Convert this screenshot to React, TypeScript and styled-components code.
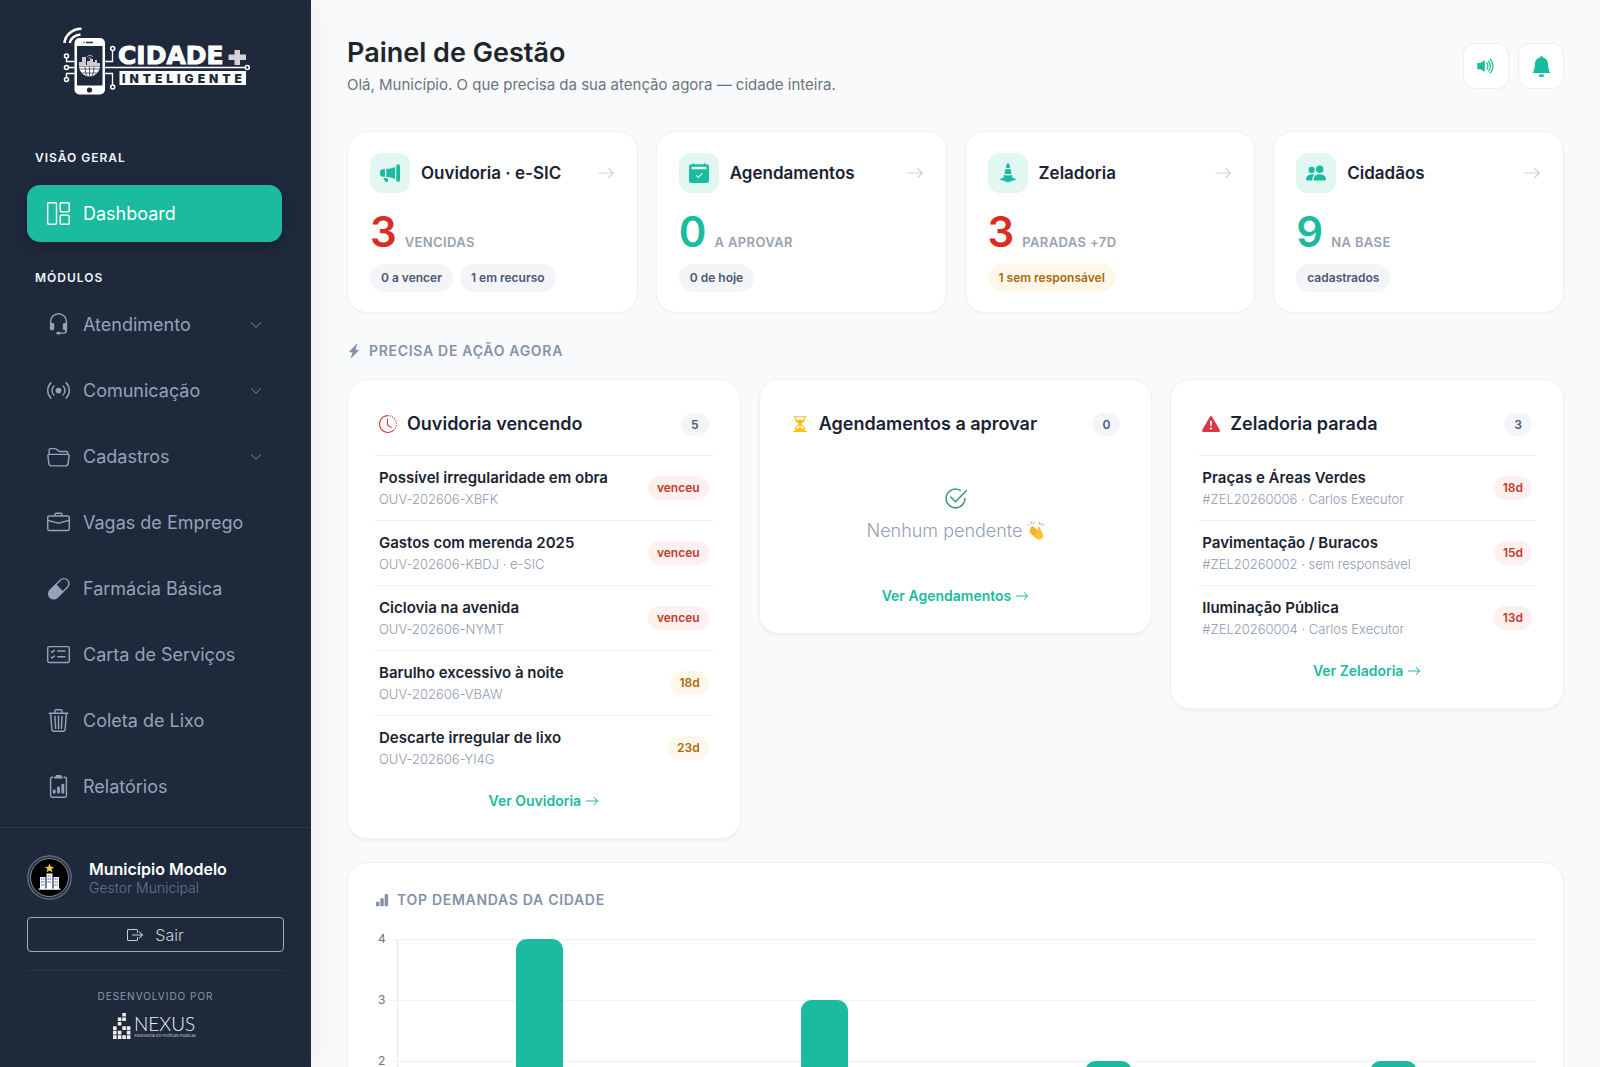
import React from "react";
import styled, { createGlobalStyle } from "styled-components";
import {
    BsArrowRight,
    BsBarChartFill,
    BsBellFill,
    BsBoxArrowRight,
    BsBriefcase,
    BsBroadcast,
    BsCalendar2CheckFill,
    BsCapsule,
    BsCardChecklist,
    BsCheck2Circle,
    BsChevronDown,
    BsClipboard2Data,
    BsClockHistory,
    BsConeStriped,
    BsExclamationTriangleFill,
    BsFolder2Open,
    BsHeadset,
    BsHourglassSplit,
    BsLightningChargeFill,
    BsMegaphoneFill,
    BsPeopleFill,
    BsTrash3,
    BsVolumeUpFill,
} from "react-icons/bs";

type Tone = "red" | "green" | "amber" | "gray";

const GlobalStyle = createGlobalStyle`
    * {
        box-sizing: border-box;
    }

    body {
        margin: 0;
        background: #f8fafc;
        color: #1a2333;
        font-family: "Inter", "Open Sans", sans-serif;
        font-size: 16px;
    }

    a {
        color: inherit;
        text-decoration: none;
    }

    h1, h2, p, ul {
        margin: 0;
        padding: 0;
    }

    ul {
        list-style: none;
    }

    button {
        font-family: inherit;
        cursor: pointer;
    }
`;

const Layout = styled.div`
    display: flex;
    height: 100vh;
`;

/* ---------- sidebar ---------- */

const Sidebar = styled.aside`
    display: flex;
    flex-direction: column;
    flex: 0 0 311px;
    background: #1e293b;
    box-shadow: 4px 0 24px rgba(30, 41, 59, 0.05);
    z-index: 1;
`;

const Brand = styled.a`
    display: flex;
    justify-content: center;
    padding: 24px 0 44px;
`;

const Nav = styled.nav`
    flex: 1;
    min-height: 0;
    overflow: hidden;
    padding: 0 29px 0 27px;
`;

const NavTitle = styled.h2`
    padding: 0 8px;
    font-size: 12px;
    line-height: 20px;
    font-weight: 600;
    letter-spacing: 1px;
    text-transform: uppercase;
    color: #f1f5f9;
`;

const NavList = styled.ul`
    display: flex;
    flex-direction: column;
    gap: 9px;
    padding: 17px 0 26px;

    & + ${NavTitle} + & {
        padding-top: 8px;
    }
`;

const NavLink = styled.a<{ $active?: boolean }>`
    display: flex;
    align-items: center;
    gap: 13px;
    height: 57px;
    padding: 0 20px;
    border-radius: 13px;
    font-size: 18px;
    color: ${({ $active }) => ($active ? "#ffffff" : "#94a3b8")};
    background: ${({ $active }) => ($active ? "#1abb9f" : "transparent")};
    box-shadow: ${({ $active }) => ($active ? "0 4px 12px rgba(0, 0, 0, 0.25)" : "none")};

    svg {
        flex: none;
        width: 23px;
        height: 23px;
    }

    svg:nth-of-type(2) {
        width: 12px;
        height: 12px;
        margin-left: auto;
        opacity: 0.8;
    }
`;

const SidebarFooter = styled.div`
    padding: 27px 27px 26px;
    border-top: 1px solid #2c384a;
`;

const User = styled.div`
    display: flex;
    align-items: center;
    gap: 17px;
`;

const UserName = styled.p`
    font-size: 16px;
    line-height: 19px;
    font-weight: 600;
    color: #ffffff;
`;

const UserRole = styled.p`
    font-size: 14px;
    line-height: 17px;
    font-weight: 300;
    color: #64748b;
`;

const Logout = styled.button`
    display: flex;
    align-items: center;
    justify-content: center;
    gap: 12px;
    width: 100%;
    height: 35px;
    margin-top: 17px;
    border: 1px solid #a5abb5;
    border-radius: 4px;
    background: transparent;
    font-size: 16px;
    font-weight: 300;
    color: #cbd0d8;
`;

const Developer = styled.div`
    display: flex;
    flex-direction: column;
    align-items: center;
    gap: 9px;
    margin-top: 18px;
    padding-top: 18px;
    border-top: 1px solid #2c384a;
    font-size: 10px;
    line-height: 15px;
    letter-spacing: 1px;
    text-transform: uppercase;
    color: #8f97a4;

    svg {
        overflow: visible;
        letter-spacing: normal;
        text-transform: none;
    }
`;

/* ---------- content ---------- */

const Main = styled.main`
    flex: 1;
    min-width: 0;
    overflow-y: auto;
    scrollbar-width: none;
    padding: 36px;
`;

const Header = styled.header`
    display: flex;
    align-items: center;
    justify-content: space-between;
    margin-bottom: 35px;
`;

const PageTitle = styled.h1`
    font-size: 27px;
    line-height: 34px;
    font-weight: 600;
    color: #212529;
`;

const Lead = styled.p`
    margin-top: 4px;
    font-size: 15px;
    line-height: 22px;
    color: #6c757d;
`;

const Actions = styled.div`
    display: flex;
    gap: 9px;
`;

const IconButton = styled.button`
    display: flex;
    align-items: center;
    justify-content: center;
    width: 46px;
    height: 46px;
    padding: 0;
    border: 1px solid #eaeef4;
    border-radius: 12px;
    background: #ffffff;
    color: #1abb9f;
`;

const StatGrid = styled.section`
    display: grid;
    grid-template-columns: repeat(4, 1fr);
    gap: 18px;
`;

const StatCard = styled.a`
    display: block;
    padding: 21px 22px 20px;
    border: 1px solid #eef1f6;
    border-radius: 20px;
    background: #ffffff;
    box-shadow: 0 1px 2px rgba(30, 41, 59, 0.03);
`;

const StatHead = styled.div`
    display: flex;
    align-items: center;
    gap: 11px;
    font-size: 17px;
    font-weight: 600;

    & > svg {
        margin-left: auto;
        color: #cbd3df;
    }
`;

const StatIcon = styled.span`
    display: flex;
    align-items: center;
    justify-content: center;
    width: 40px;
    height: 40px;
    border-radius: 12px;
    background: #e2f7f2;
    color: #1abb9f;
`;

const StatValue = styled.div<{ $tone: Tone }>`
    display: flex;
    align-items: baseline;
    gap: 8px;
    margin: 17px 0 11px;
    font-size: 42px;
    line-height: 43px;
    font-weight: 600;
    color: ${({ $tone }) => ($tone === "red" ? "#d92d20" : "#1abb9f")};

    small {
        font-size: 13px;
        line-height: 16px;
        letter-spacing: 0.03em;
        text-transform: uppercase;
        color: #98a2b3;
    }
`;

const Chips = styled.div`
    display: flex;
    gap: 7px;
`;

const chipColors: Record<Tone, string> = {
    red: "background: #fef0ef; color: #c0392b;",
    green: "background: #e2f7f2; color: #1abb9f;",
    amber: "background: #fff8ea; color: #a86b0c;",
    gray: "background: #f3f5f9; color: #4a5873;",
};

const Chip = styled.span<{ $tone: Tone }>`
    padding: 0 11px;
    border-radius: 14px;
    font-size: 12px;
    line-height: 28px;
    font-weight: 600;
    ${({ $tone }) => chipColors[$tone]}
`;

const SectionTitle = styled.h2`
    display: flex;
    align-items: center;
    gap: 8px;
    font-size: 14px;
    line-height: 22px;
    font-weight: 600;
    letter-spacing: 0.05em;
    text-transform: uppercase;
    color: #8592a8;

    svg {
        width: 14px;
        height: 14px;
    }
`;

const SectionHead = styled.div`
    padding: 27px 0 17px;
`;

const PanelGrid = styled.section`
    display: grid;
    grid-template-columns: repeat(3, 1fr);
    align-items: start;
    gap: 18px;
`;

const Panel = styled.article`
    padding: 27px;
    border: 1px solid #eef1f6;
    border-radius: 20px;
    background: #ffffff;
    box-shadow: 0 2px 3px rgba(30, 41, 59, 0.05);
`;

const PanelHead = styled.header<{ $color: string }>`
    display: flex;
    align-items: center;
    gap: 10px;
    height: 34px;
    margin-bottom: 14px;
    padding: 0 4px;

    svg {
        flex: none;
        color: ${({ $color }) => $color};
    }
`;

const PanelTitle = styled.h2`
    font-size: 18px;
    line-height: 24px;
    font-weight: 600;
`;

const Counter = styled.span`
    margin-left: auto;
    padding: 0 10px;
    border-radius: 12px;
    font-size: 12px;
    line-height: 23px;
    font-weight: 600;
    ${chipColors.gray}
`;

const Row = styled.a`
    display: flex;
    align-items: center;
    justify-content: space-between;
    height: 65px;
    padding: 0 4px;
    border-top: 1px solid #eff2f5;
`;

const RowTitle = styled.p`
    font-size: 15px;
    line-height: 22px;
    font-weight: 600;
`;

const RowMeta = styled.p`
    font-size: 13px;
    line-height: 20px;
    font-weight: 300;
    color: #8f9bb0;
`;

const RowBadge = styled.span<{ $tone: Tone }>`
    padding: 0 9px;
    border-radius: 12px;
    font-size: 12px;
    line-height: 24px;
    font-weight: 600;
    ${({ $tone }) => chipColors[$tone]}
`;

const PanelLink = styled.a`
    display: flex;
    align-items: center;
    justify-content: center;
    gap: 4px;
    padding-top: 10px;
    font-size: 14px;
    line-height: 21px;
    font-weight: 600;
    color: #1abb9f;
`;

const Empty = styled.div`
    display: flex;
    flex-direction: column;
    align-items: center;
    gap: 6px;
    padding: 31px 0;
    font-size: 18px;
    line-height: 27px;
    font-weight: 300;
    color: #94a0b3;

    & > svg {
        color: #3f9d71;
    }

    p {
        display: flex;
        align-items: center;
        gap: 4px;
    }
`;

const ChartPanel = styled(Panel)`
    margin-top: 23px;
    padding-top: 26px;
`;

const Chart = styled.div`
    display: grid;
    grid-template-columns: 14px 1fr;
    padding: 28px 0 30px;
`;

const Scale = styled.div`
    display: flex;
    flex-direction: column;
    gap: 45px;
    margin-top: -8px;
    padding-left: 3px;
    font-size: 12px;
    line-height: 16px;
    color: #6b7280;
`;

const Plot = styled.div`
    display: grid;
    grid-template-columns: repeat(4, 1fr);
    align-items: end;
    justify-items: center;
    height: 244px;
    padding-left: 8px;
    background:
        linear-gradient(#e6e8eb, #e6e8eb) 8px 0 / 1px 100% no-repeat,
        repeating-linear-gradient(#f1f3f5 0 1px, transparent 1px 61px);
`;

const Bar = styled.div`
    width: 47px;
    border-radius: 11px 11px 0 0;
    background: #1abb9f;
`;

const DashboardIcon = () => (
    <svg viewBox="0 0 23 23" fill="none" stroke="currentColor" strokeWidth="1.4">
        <rect x="0.7" y="0.7" width="8.8" height="21.6" rx="1" />
        <rect x="13.2" y="0.7" width="9" height="9" rx="1" />
        <rect x="13.2" y="13.3" width="9" height="9" rx="1" />
    </svg>
);

const CidadeLogo = () => (
    <svg width="190" height="80" viewBox="0 0 190 80" role="img" aria-label="Cidade+ Inteligente">
        <path
            d="M3.500 19A17 15 0 0 1 20.500 4.800M8.800 19A12 9.500 0 0 1 19.500 10.500"
            fill="none"
            stroke="#ffffff"
            strokeWidth="2.600"
        />
        <g transform="translate(0 6)">
            <g fill="none" stroke="#ffffff">
                <path
                    d="M13.500 37.500H8M13.500 31.500H5.500V28M13.500 43.500H5.500V47M44 31.500H51.500V21M44 43.500H51.500V55M44 37.500H184"
                    strokeWidth="1.3"
                />
                <g strokeWidth="1.6">
                    <circle cx="5.500" cy="26" r="2" />
                    <circle cx="5.500" cy="37.500" r="2" />
                    <circle cx="5.500" cy="49.500" r="2" />
                    <circle cx="51.700" cy="18.500" r="2" />
                    <circle cx="51.700" cy="57" r="2" />
                    <circle cx="186.300" cy="37.500" r="2" />
                </g>
            </g>
            <rect x="13.500" y="8" width="30.500" height="56.500" rx="5" fill="#ffffff" />
            <rect x="16" y="16" width="25.500" height="39.500" fill="#1e293b" />
            <path d="M22.500 12.500h1M25 12.500h7" stroke="#1e293b" strokeWidth="1.500" />
            <circle cx="28.500" cy="60" r="2.600" fill="#1e293b" />
            <path d="M18 36V32h3v-5h4v8h1v-4h3v-2h3v3h2v-2h2v3h3v3z" fill="#c9ccd1" />
            <path d="M26 26.500a4.500 4.500 0 0 1 6 0M27.500 28.500a2 2 0 0 1 3 0" fill="none" stroke="#a9aeb6" />
            <path d="M18 36.500h21a10.500 10 0 0 1-21 0z" fill="#ffffff" />
            <path d="M18 39h21M28.500 37v9.500M24 37q0 6 2 9M33 37q0 6-2 9M20 43h17" fill="none" stroke="#1e293b" strokeWidth="0.700" />
            <text x="57" y="34" fontFamily="DejaVu Sans" fontWeight="700" fontSize="25" fill="#ffffff" stroke="#ffffff" strokeWidth="1">
                CIDADE
            </text>
            <path d="M173.500 20h5.500v4.500h6v5.500h-6v5h-5.500v-5h-6v-5.500h6z" fill="#d3d3d6" />
            <rect x="58.500" y="41" width="126.500" height="14" fill="#ffffff" />
            <text x="61" y="52.500" fontFamily="Inter" fontWeight="900" fontSize="12" letterSpacing="4" fill="#1e293b">
                INTELIGENTE
            </text>
        </g>
    </svg>
);

const CityAvatar = () => (
    <svg width="45" height="45" viewBox="0 0 45 45" aria-hidden="true">
        <circle cx="22.500" cy="22.500" r="21.700" fill="#243043" stroke="#64748b" strokeWidth="1.200" />
        <circle cx="22.500" cy="22.500" r="19" fill="#000000" stroke="#8d8d8d" />
        <path d="M11.500 33.500h22v1.300h-22zM13 22h5.500v11.500H13zM19.500 18.500h6v15h-6zM26.500 22H32v11.500h-5.500z" fill="#ffffff" />
        <path d="M14 24h3.500M14 27h3.500M14 30h3.500M20.500 21h4M20.500 24h4M20.500 27h4M27.500 24h3.500M27.500 27h3.500M27.500 30h3.500" stroke="#3b62b5" strokeDasharray="1.500 0.500" />
        <path d="m22.500 8.500 1.300 3.200 3.500.2-2.700 2.200.9 3.400-3-1.900-3 1.900.9-3.400-2.700-2.200 3.500-.2z" fill="#f5c842" />
    </svg>
);

const NexusLogo = () => (
    <svg width="86" height="28" viewBox="0 0 86 28" role="img" aria-label="Nexus">
        <path
            d="M9.300 0h3.600v3.600H9.300zM4.800 4.400h3.600V8H4.800zM9.300 4.400h3.600V8H9.300zM4.800 8.900h3.600v3.600H4.800zM0 13.300h3.600v3.600H0zM9.300 13.300h3.600v3.600H9.300zM13.800 13.300h3.600v3.600h-3.600zM0 17.800h3.600v3.600H0zM4.800 17.800h3.600v3.600H4.800zM13.800 17.800h3.600v3.600h-3.600zM0 22.300h3.600v3.600H0zM4.800 22.300h3.600v3.600H4.800zM9.300 22.300h3.600v3.600H9.300zM13.800 22.300h3.600v3.600h-3.600z"
            fill="#f1ece9"
        />
        <text x="21" y="18" fontFamily="Lato" fontWeight="300" fontSize="19" fill="#f3f4f6">NEXUS</text>
        <text x="21" y="24" fontFamily="Inter" fontSize="4" fill="#c4c8cf">Assessoria em Políticas Públicas</text>
    </svg>
);

const ClapIcon = () => (
    <svg width="18" height="19" viewBox="0 0 18 19" role="img" aria-label="👏">
        <path d="M1 3.500 2.200 4M4 .8l.4 1.500M7 1.500l-.8 1.400M12 1.500l.5 1.500M14.500 2.500l-.4 1.300M17 3.500l-1.200.9" stroke="#9aa1ab" strokeLinecap="round" />
        <path d="M4.500 5.500c.8-.8 1.500-.3 2 .2l5 4.300-.8-3c-.2-1.300 1.500-1.800 2.100-.6l3 6.600c1 2.400-.2 5-2.600 5.500-2 .5-3.700-.5-5-1.700L2.800 12c-.9-.9 0-2 .9-1.600C2 9 2.600 8 3.500 8c-.4-1 .3-2.100 1-2.500z" fill="#fbc236" />
        <path d="m3.700 10.400 4.400 3.800M3.700 8l5.300 4.500M5 6l5.500 4.700" fill="none" stroke="#e08f1c" strokeWidth="0.800" />
    </svg>
);

const modules = [
    { label: "Atendimento", icon: BsHeadset, nested: true },
    { label: "Comunicação", icon: BsBroadcast, nested: true },
    { label: "Cadastros", icon: BsFolder2Open, nested: true },
    { label: "Vagas de Emprego", icon: BsBriefcase },
    { label: "Farmácia Básica", icon: BsCapsule },
    { label: "Carta de Serviços", icon: BsCardChecklist },
    { label: "Coleta de Lixo", icon: BsTrash3 },
    { label: "Relatórios", icon: BsClipboard2Data },
];

const stats: { title: string; icon: React.ElementType; value: number; unit: string; tone: Tone; chips: string[]; chipTone: Tone }[] = [
    { title: "Ouvidoria · e-SIC", icon: BsMegaphoneFill, value: 3, unit: "Vencidas", tone: "red", chips: ["0 a vencer", "1 em recurso"], chipTone: "gray" },
    { title: "Agendamentos", icon: BsCalendar2CheckFill, value: 0, unit: "A aprovar", tone: "green", chips: ["0 de hoje"], chipTone: "gray" },
    { title: "Zeladoria", icon: BsConeStriped, value: 3, unit: "Paradas +7d", tone: "red", chips: ["1 sem responsável"], chipTone: "amber" },
    { title: "Cidadãos", icon: BsPeopleFill, value: 9, unit: "Na base", tone: "green", chips: ["cadastrados"], chipTone: "gray" },
];

const panels: {
    title: string;
    icon: React.ElementType;
    color: string;
    link: string;
    rows: { title: string; meta: string; badge: string; tone: Tone }[];
}[] = [
    {
        title: "Ouvidoria vencendo",
        icon: BsClockHistory,
        color: "#dc3545",
        link: "Ver Ouvidoria",
        rows: [
            { title: "Possível irregularidade em obra", meta: "OUV-202606-XBFK", badge: "venceu", tone: "red" },
            { title: "Gastos com merenda 2025", meta: "OUV-202606-KBDJ · e-SIC", badge: "venceu", tone: "red" },
            { title: "Ciclovia na avenida", meta: "OUV-202606-NYMT", badge: "venceu", tone: "red" },
            { title: "Barulho excessivo à noite", meta: "OUV-202606-VBAW", badge: "18d", tone: "amber" },
            { title: "Descarte irregular de lixo", meta: "OUV-202606-YI4G", badge: "23d", tone: "amber" },
        ],
    },
    { title: "Agendamentos a aprovar", icon: BsHourglassSplit, color: "#ffc107", link: "Ver Agendamentos", rows: [] },
    {
        title: "Zeladoria parada",
        icon: BsExclamationTriangleFill,
        color: "#dc3545",
        link: "Ver Zeladoria",
        rows: [
            { title: "Praças e Áreas Verdes", meta: "#ZEL20260006 · Carlos Executor", badge: "18d", tone: "red" },
            { title: "Pavimentação / Buracos", meta: "#ZEL20260002 · sem responsável", badge: "15d", tone: "red" },
            { title: "Iluminação Pública", meta: "#ZEL20260004 · Carlos Executor", badge: "13d", tone: "red" },
        ],
    },
];

const demands = [4, 3, 2, 2];
const scaleMax = 4;

const App = () => {
    return (
        <>
            <GlobalStyle />
            <Layout>
                <Sidebar>
                    <Brand href="#">
                        <CidadeLogo />
                    </Brand>
                    <Nav>
                        <NavTitle>Visão geral</NavTitle>
                        <NavList>
                            <li>
                                <NavLink href="#" $active>
                                    <DashboardIcon />
                                    Dashboard
                                </NavLink>
                            </li>
                        </NavList>
                        <NavTitle>Módulos</NavTitle>
                        <NavList>
                            {modules.map(({ label, icon: Icon, nested }) => (
                                <li key={label}>
                                    <NavLink href="#">
                                        <Icon />
                                        {label}
                                        {nested && <BsChevronDown />}
                                    </NavLink>
                                </li>
                            ))}
                        </NavList>
                    </Nav>
                    <SidebarFooter>
                        <User>
                            <CityAvatar />
                            <div>
                                <UserName>Município Modelo</UserName>
                                <UserRole>Gestor Municipal</UserRole>
                            </div>
                        </User>
                        <Logout type="button">
                            <BsBoxArrowRight />
                            Sair
                        </Logout>
                        <Developer>
                            Desenvolvido por
                            <NexusLogo />
                        </Developer>
                    </SidebarFooter>
                </Sidebar>

                <Main>
                    <Header>
                        <div>
                            <PageTitle>Painel de Gestão</PageTitle>
                            <Lead>Olá, Município. O que precisa da sua atenção agora — cidade inteira.</Lead>
                        </div>
                        <Actions>
                            <IconButton type="button" aria-label="Som">
                                <BsVolumeUpFill size={20} />
                            </IconButton>
                            <IconButton type="button" aria-label="Notificações">
                                <BsBellFill size={21} />
                            </IconButton>
                        </Actions>
                    </Header>

                    <StatGrid>
                        {stats.map(({ title, icon: Icon, value, unit, tone, chips, chipTone }) => (
                            <StatCard href="#" key={title}>
                                <StatHead>
                                    <StatIcon>
                                        <Icon size={20} />
                                    </StatIcon>
                                    {title}
                                    <BsArrowRight size={18} />
                                </StatHead>
                                <StatValue $tone={tone}>
                                    {value}
                                    <small>{unit}</small>
                                </StatValue>
                                <Chips>
                                    {chips.map((chip) => (
                                        <Chip $tone={chipTone} key={chip}>{chip}</Chip>
                                    ))}
                                </Chips>
                            </StatCard>
                        ))}
                    </StatGrid>

                    <SectionHead>
                        <SectionTitle>
                            <BsLightningChargeFill />
                            Precisa de ação agora
                        </SectionTitle>
                    </SectionHead>

                    <PanelGrid>
                        {panels.map(({ title, icon: Icon, color, link, rows }) => (
                            <Panel key={title}>
                                <PanelHead $color={color}>
                                    <Icon size={18} />
                                    <PanelTitle>{title}</PanelTitle>
                                    <Counter>{rows.length}</Counter>
                                </PanelHead>
                                {rows.map((row) => (
                                    <Row href="#" key={row.meta}>
                                        <div>
                                            <RowTitle>{row.title}</RowTitle>
                                            <RowMeta>{row.meta}</RowMeta>
                                        </div>
                                        <RowBadge $tone={row.tone}>{row.badge}</RowBadge>
                                    </Row>
                                ))}
                                {rows.length === 0 && (
                                    <Empty>
                                        <BsCheck2Circle size={25} />
                                        <p>Nenhum pendente <ClapIcon /></p>
                                    </Empty>
                                )}
                                <PanelLink href="#">
                                    {link}
                                    <BsArrowRight />
                                </PanelLink>
                            </Panel>
                        ))}
                    </PanelGrid>

                    <ChartPanel>
                        <SectionTitle>
                            <BsBarChartFill />
                            Top demandas da cidade
                        </SectionTitle>
                        <Chart>
                            <Scale>
                                {[4, 3, 2, 1].map((tick) => (
                                    <span key={tick}>{tick}</span>
                                ))}
                            </Scale>
                            <Plot>
                                {demands.map((value, index) => (
                                    <Bar key={index} style={{ height: `${(value / scaleMax) * 100}%` }} />
                                ))}
                            </Plot>
                        </Chart>
                    </ChartPanel>
                </Main>
            </Layout>
        </>
    );
};

export default App;
